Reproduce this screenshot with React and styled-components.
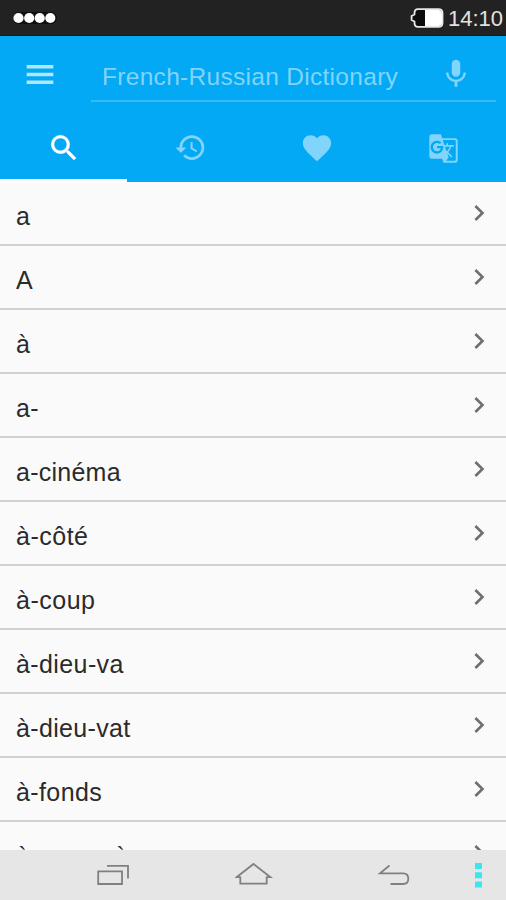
import React from 'react'
import styled, { createGlobalStyle } from 'styled-components'
import {
  MdSearch,
  MdHistory,
  MdFavorite,
  MdGTranslate,
  MdMic,
  MdChevronRight,
} from 'react-icons/md'

const GlobalStyle = createGlobalStyle`
  * {
    box-sizing: border-box;
  }
  body {
    margin: 0;
    overflow: hidden;
    font-family: 'Liberation Sans', Arial, sans-serif;
  }
`

const Screen = styled.div`
  display: flex;
  flex-direction: column;
  width: 506px;
  height: 900px;
  background-color: #fafafa;
`

const StatusBar = styled.div`
  display: flex;
  flex: none;
  align-items: center;
  justify-content: space-between;
  height: 36px;
  padding: 0 3px 0 13px;
  background-color: #222222;
  border-bottom: 1px solid #0c1a22;
`

const StatusRight = styled.div`
  display: flex;
  align-items: center;
  gap: 4px;
`

const Clock = styled.span`
  color: #e2e2e2;
  font-size: 22px;
  line-height: 36px;
  padding-top: 2px;
`

const Header = styled.header`
  flex: none;
  height: 146px;
  background-color: #03a9f4;
`

const SearchBar = styled.div`
  display: flex;
  height: 78px;
  padding: 10px 10px 0 26px;
`

const MenuButton = styled.button`
  display: flex;
  width: 65px;
  height: 56px;
  padding: 18px 0 0;
  border: 0;
  background-color: transparent;
`

const SearchField = styled.div`
  display: flex;
  flex: 1;
  justify-content: space-between;
  height: 56px;
  padding: 0 23px 0 11px;
  border-bottom: 2px solid #35baf6;
  color: #81d4fa;
`

const Placeholder = styled.span`
  font-size: 24.5px;
  line-height: 28px;
  padding-top: 17px;
  letter-spacing: 0.3px;
  white-space: nowrap;
`

const MicIcon = styled(MdMic)`
  margin-top: 11px;
`

const Tabs = styled.nav`
  display: flex;
  height: 68px;
`

const Tab = styled.div`
  display: flex;
  flex: 1;
  justify-content: center;
  padding: ${({ $top }) => $top}px 0 0 1px;
  color: ${({ $active }) => ($active ? '#ffffff' : '#81d4fa')};
  border-bottom: ${({ $active }) => ($active ? '3px solid #ffffff' : '0')};

  svg {
    stroke-width: ${({ $active }) => ($active ? 0.3 : 0)};
  }
  path[fill='none'] {
    stroke: none;
  }
`

const List = styled.ul`
  flex: 1;
  min-height: 0;
  margin: 0;
  padding: 0;
  overflow: hidden;
  list-style: none;
`

const Row = styled.li`
  display: flex;
  justify-content: space-between;
  height: 64px;
  padding: 0 11px 0 16px;
  border-bottom: 2px solid #d0d0d0;
`

const Word = styled.span`
  color: #2b2b2b;
  font-size: 25px;
  line-height: 28px;
  padding-top: 20px;
  letter-spacing: ${({ $spacing }) => $spacing}px;
`

const Chevron = styled(MdChevronRight)`
  margin-top: 15px;
  color: #6f6f6f;
`

const NavBar = styled.footer`
  display: flex;
  flex: none;
  align-items: flex-start;
  height: 50px;
  padding: 12px 22px 0 96px;
  background-color: #e6e6e6;
`

const NavIcon = styled.svg`
  display: block;
  flex: none;
  margin-right: ${({ $gap }) => $gap || 0}px;
  fill: none;
  stroke: #808080;
  stroke-width: 1.8;
`

const tabs = [
  { Icon: MdSearch, size: 34, top: 17 },
  { Icon: MdHistory, size: 33, top: 17 },
  { Icon: MdFavorite, size: 34, top: 17 },
  { Icon: MdGTranslate, size: 31, top: 19 },
]

const words = [
  { text: 'a', spacing: 0.4 },
  { text: 'A', spacing: 0.4 },
  { text: 'à', spacing: 0.4 },
  { text: 'a-', spacing: 0.4 },
  { text: 'a-cinéma', spacing: 0.25 },
  { text: 'à-côté', spacing: 0.5 },
  { text: 'à-coup', spacing: 0.5 },
  { text: 'à-dieu-va', spacing: 0.4 },
  { text: 'à-dieu-vat', spacing: 0.35 },
  { text: 'à-fonds', spacing: 0.4 },
  { text: 'à-peu-près', spacing: 0.4 },
]

function SignalDots() {
  return (
    <svg width="44" height="14" viewBox="0 0 44 14">
      <rect x="0" y="1" width="44" height="12" rx="6" fill="#101010" />
      {[5.5, 16.2, 26.7, 37.3].map((cx) => (
        <circle key={cx} cx={cx} cy="7" r="5.1" fill="#ffffff" />
      ))}
    </svg>
  )
}

function Battery() {
  return (
    <svg width="34" height="20" viewBox="0 0 34 20">
      <path
        d="M8 1.2H28.5Q32.5 1.2 32.5 5V15Q32.5 18.8 28.5 18.8H8Q4.5 18.8 4.5 15V13.5L1.6 12V8L4.5 6.5V5Q4.5 1.2 8 1.2Z"
        fill="#0c0c0c"
        stroke="#e8e8e8"
        strokeWidth="1.8"
      />
      <path d="M15 2H28.5Q32 2 32 5V15Q32 18 28.5 18H15Z" fill="#ffffff" />
    </svg>
  )
}

function App() {
  return (
    <>
      <GlobalStyle />
      <Screen>
        <StatusBar>
          <SignalDots />
          <StatusRight>
            <Battery />
            <Clock>14:10</Clock>
          </StatusRight>
        </StatusBar>

        <Header>
          <SearchBar>
            <MenuButton aria-label="Menu">
              <svg width="28" height="21" viewBox="0 0 28 21">
                <path d="M0.7 1H27.3V4.5H0.7ZM0.7 8.7H27.3V12.2H0.7ZM0.7 16.4H27.3V19.9H0.7Z" fill="#b3e5fc" />
              </svg>
            </MenuButton>
            <SearchField>
              <Placeholder>French-Russian Dictionary</Placeholder>
              <MicIcon size={34} />
            </SearchField>
          </SearchBar>
          <Tabs>
            {tabs.map(({ Icon, size, top }, idx) => (
              <Tab key={idx} $active={idx === 0} $top={top}>
                <Icon size={size} />
              </Tab>
            ))}
          </Tabs>
        </Header>

        <List>
          {words.map(({ text, spacing }) => (
            <Row key={text}>
              <Word $spacing={spacing}>{text}</Word>
              <Chevron size={32} />
            </Row>
          ))}
        </List>

        <NavBar>
          {/* recent apps */}
          <NavIcon width="34" height="26" viewBox="0 0 34 26" $gap={105}>
            <path d="M2.2 9.3H26V22H2.2ZM11 3.8H32V16.5" />
          </NavIcon>
          {/* home */}
          <NavIcon width="38" height="26" viewBox="0 0 38 26" $gap={104}>
            <path d="M5.3 14.5V21.7H31.7V14.5M5.3 15.2H1.5L18.5 2L35.5 15.2H31.7" />
          </NavIcon>
          {/* back */}
          <NavIcon width="34" height="26" viewBox="0 0 34 26" $gap={63}>
            <path d="M12.5 3.5L3 11.3H26.2Q31.3 11.3 31.3 16.7Q31.3 22 26.2 22H13.5" />
          </NavIcon>
          {/* overflow */}
          <svg width="10" height="28" viewBox="0 0 10 28">
            <path d="M1 1H8V7H1ZM1 10.2H8V16.2H1ZM1 19.6H8V25.6H1Z" fill="#3ae6f2" />
          </svg>
        </NavBar>
      </Screen>
    </>
  )
}

export default App
